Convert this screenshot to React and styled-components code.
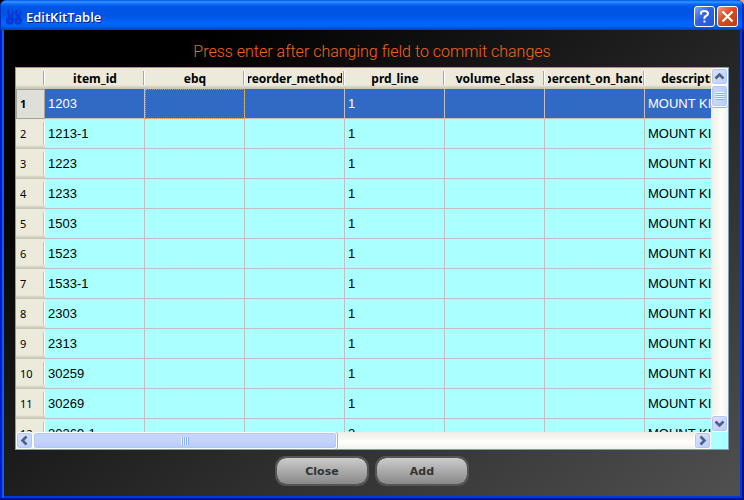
import React from "react";
import styled, { createGlobalStyle, css } from "styled-components";

const Global = createGlobalStyle`
  * { box-sizing: border-box; }
  body { margin: 0; background: linear-gradient(to right, #000 50%, #f0a080 50%); font-family: "Liberation Sans", Arial, sans-serif; }
`;

const Window = styled.main`
  height: 100vh;
  display: flex;
  flex-direction: column;
  background: #0038e0;
  border-radius: 7px 7px 0 0;
  overflow: hidden;
  padding: 0 4px 4px;
  box-shadow: inset 0 -2px #00138c, inset -2px 0 #00138c, inset 2px 0 #0019cf, inset 4px 0 #0f5cf0;
`;

const TitleBar = styled.header`
  flex: none;
  height: 30px;
  margin: 0 -4px;
  padding: 3px 6px 0 6px;
  display: flex;
  align-items: center;
  gap: 2px;
  background: linear-gradient(#0058e6 0, #3a93ff 2px, #0a6bf5 4px, #0054e3 7px, #0055e5 16px, #0066ff 23px, #0062f8 26px, #0048d0 29px, #003dd7 30px);
  box-shadow: inset -2px 0 #0030c0, inset 1px 0 #0030c0;
`;

const Title = styled.h1`
  flex: 1;
  margin: 0 0 0 2px;
  color: #fff;
  font: 600 13px/16px "Open Sans", "Trebuchet MS", sans-serif;
  text-shadow: 1px 1px #0a1883;
`;

const CaptionButton = styled.button`
  width: 21px;
  height: 21px;
  padding: 0;
  border: 1px solid #fff;
  border-radius: 3px;
  display: grid;
  place-items: center;
  background: ${(p) =>
    p.$danger
      ? "linear-gradient(135deg, #f09a80, #dd4a22 45%, #c23a10)"
      : "linear-gradient(135deg, #7ba2f5, #2f62e0 45%, #2257d8)"};
`;

const Content = styled.section`
  flex: 1;
  min-height: 0;
  display: flex;
  flex-direction: column;
  padding: 12px 11px 10px;
  background: linear-gradient(145deg, #000 15%, #505050);
`;

const Message = styled.p`
  margin: 0 0 6px;
  text-align: center;
  color: #f26522;
  font: 300 16px/19px Roboto, "Liberation Sans", sans-serif;
`;

const TablePanel = styled.div`
  flex: 1;
  min-height: 0;
  display: grid;
  grid-template: minmax(0, 1fr) 17px / minmax(0, 1fr) 17px;
  border: 1px solid #7f9db9;
  background: #aff;
`;

const Viewport = styled.div`
  overflow: hidden;
`;

const Table = styled.table`
  width: 729px;
  table-layout: fixed;
  border-collapse: separate;
  border-spacing: 0;
  font-size: 13px;
`;

const HeaderCell = styled.th`
  height: 21px;
  padding: 0;
  overflow: hidden;
  white-space: nowrap;
  font: bold 12px/20px "Noto Sans", Tahoma, sans-serif;
  background:
    linear-gradient(#aca899, #aca899) right 1px top 3px / 1px 14px no-repeat,
    linear-gradient(#fff, #fff) right 0 top 3px / 1px 14px no-repeat,
    linear-gradient(#ebeadb 17px, #e2decd 18px, #d6d2c2 19px, #cbc7b8 20px);
`;

const HeaderLabel = styled.span`
  display: flex;
  justify-content: center;
  margin: 0 3px;
  overflow: hidden;
`;

const RowHeader = styled.th`
  height: 30px;
  padding: 0 0 0 4px;
  text-align: left;
  font: 11px/14px "Noto Sans", Tahoma, sans-serif;
  background:
    linear-gradient(#c5c2b2, #c5c2b2) right 1px top 3px / 1px 23px no-repeat,
    linear-gradient(#fff, #fff) right 0 top 3px / 1px 23px no-repeat,
    linear-gradient(#ebeadb 26px, #e2decd 27px, #d6d2c2 28px, #cbc7b8 29px);
  ${(p) =>
    p.$selected &&
    css`
      padding-left: 3px;
      font-weight: bold;
      background: #dedfd8;
      border: 1px solid #a5a597;
    `}
`;

const Cell = styled.td`
  height: 30px;
  padding: 0 3px;
  overflow: hidden;
  white-space: nowrap;
  border: solid #c0c0c0;
  border-width: 0 1px 1px 0;
  color: ${(p) => (p.$selected ? "#fff" : "#000")};
  background: ${(p) => (p.$selected ? "#316ac5" : "#aff")};
  ${(p) =>
    p.$focused &&
    css`
      outline: 1px dotted #ce953a;
      outline-offset: -1px;
    `}
`;

const ScrollBar = styled.div`
  display: flex;
  flex-direction: ${(p) => (p.$vertical ? "column" : "row")};
  background: linear-gradient(${(p) => (p.$vertical ? "to right" : "to bottom")}, #eeede5, #fefefb 60%, #f3f2ec);
`;

const ScrollButton = styled.button`
  flex: none;
  width: 17px;
  height: 17px;
  padding: 0;
  display: grid;
  place-items: center;
  border: 1px solid #fff;
  border-radius: 3px;
  background: linear-gradient(135deg, #dbe5ff, #b9cbf8);
  box-shadow: inset 0 0 0 1px #b4c8f6;
`;

const Track = styled.div`
  flex: 1;
  display: flex;
  flex-direction: ${(p) => (p.$vertical ? "column" : "row")};
`;

const Thumb = styled.div`
  flex: 0 0 ${(p) => p.$size};
  display: grid;
  place-items: center;
  border: 1px solid #fff;
  border-radius: 3px;
  box-shadow: inset 0 0 0 1px #b4c8f6, ${(p) => (p.$vertical ? "0 1px" : "1px 0")} #98b1e4;
  background: linear-gradient(${(p) => (p.$vertical ? "to right" : "to bottom")}, #c8d6fb, #c2d3fc 60%, #b7c9f5);
`;

const Grip = styled.span`
  width: 8px;
  height: 8px;
  background: repeating-linear-gradient(${(p) => (p.$vertical ? "to bottom" : "to right")}, #eef4fe 0 1px, #8cb0f8 1px 2px);
`;

const Actions = styled.footer`
  display: flex;
  justify-content: center;
  gap: 6px;
  padding-top: 6px;
`;

const ActionButton = styled.button`
  width: 94px;
  height: 30px;
  padding: 1px 0 0;
  border: 2px solid #555;
  border-radius: 11px;
  color: #333;
  background: linear-gradient(#ccc, #888) padding-box;
  font: bold 11px/16px "DejaVu Sans", Verdana, sans-serif;
`;

const rotations = { up: 0, right: 90, down: 180, left: 270 };

function Arrow({ direction }) {
  return (
    <svg width="11" height="11" viewBox="0 0 11 11" aria-hidden="true">
      <path d="M1.500 7.500 5.500 3.500 9.500 7.500" fill="none" stroke="#4d6185" strokeWidth="2.600" transform={`rotate(${rotations[direction]} 5.5 5.5)`} />
    </svg>
  );
}

const columns = ["item_id", "ebq", "reorder_method", "prd_line", "volume_class", "percent_on_hand", "description"];
const rows = [
  ["1203", "1"], ["1213-1", "1"], ["1223", "1"], ["1233", "1"], ["1503", "1"], ["1523", "1"],
  ["1533-1", "1"], ["2303", "1"], ["2313", "1"], ["30259", "1"], ["30269", "1"], ["30269-1", "2"],
].map(([id, line]) => [id, "", "", line, "", "", "MOUNT KIT"]);

export default function App() {
  return (
    <Window>
      <Global />
      <TitleBar>
        <svg width="16" height="16" viewBox="0 0 16 16" aria-hidden="true">
          <g fill="#0a38d8">
            <path d="M1 1 3 0 3.500 4 5 5.500 6.500 1.500 8 4 7 7 8 10v3l-2 2.500H2L0 14V9.500L2.500 8 1 4z" />
            <path d="M9 2.500 11 0l.5 4 1 1.500L14 1l1.500 3-1 3L16 10v3l-2 2.500h-4L8.500 14V9.500l2-1.500L9 5z" />
          </g>
          <path d="M3 11.500h2v1.500H3zM11 11.500h2v1.500h-2z" fill="#0054e3" />
        </svg>
        <Title>EditKitTable</Title>
        <CaptionButton aria-label="Help">
          <svg width="13" height="15" viewBox="0 0 13 15" aria-hidden="true">
            <path d="M3 5.500V4q0-2 3.500-2T10 4.500Q10 6 8 7T6.500 10M6.500 11.500v2" fill="none" stroke="#fff" strokeWidth="2" />
          </svg>
        </CaptionButton>
        <CaptionButton $danger aria-label="Close window">
          <svg width="13" height="13" viewBox="0 0 13 13" aria-hidden="true">
            <path d="m1.500 1.500 10 10m0-10-10 10" stroke="#fff" strokeWidth="2.2" />
          </svg>
        </CaptionButton>
      </TitleBar>
      <Content>
        <Message>Press enter after changing field to commit changes</Message>
        <TablePanel>
          <Viewport>
            <Table>
              <colgroup>
                <col width="29" />
                {columns.map((c) => <col key={c} width="100" />)}
              </colgroup>
              <thead>
                <tr>
                  <HeaderCell />
                  {columns.map((c) => <HeaderCell key={c} scope="col"><HeaderLabel>{c}</HeaderLabel></HeaderCell>)}
                </tr>
              </thead>
              <tbody>
                {rows.map((row, r) => (
                  <tr key={row[0]}>
                    <RowHeader scope="row" $selected={r === 0}>{r + 1}</RowHeader>
                    {row.map((value, c) => (
                      <Cell key={columns[c]} $selected={r === 0} $focused={r === 0 && c === 1}>{value}</Cell>
                    ))}
                  </tr>
                ))}
              </tbody>
            </Table>
          </Viewport>
          <ScrollBar $vertical>
            <ScrollButton aria-label="Scroll up"><Arrow direction="up" /></ScrollButton>
            <Track $vertical><Thumb $vertical $size="22px"><Grip $vertical /></Thumb></Track>
            <ScrollButton aria-label="Scroll down"><Arrow direction="down" /></ScrollButton>
          </ScrollBar>
          <ScrollBar>
            <ScrollButton aria-label="Scroll left"><Arrow direction="left" /></ScrollButton>
            <Track><Thumb $size="304px"><Grip /></Thumb></Track>
            <ScrollButton aria-label="Scroll right"><Arrow direction="right" /></ScrollButton>
          </ScrollBar>
        </TablePanel>
        <Actions>
          <ActionButton>Close</ActionButton>
          <ActionButton>Add</ActionButton>
        </Actions>
      </Content>
    </Window>
  );
}
